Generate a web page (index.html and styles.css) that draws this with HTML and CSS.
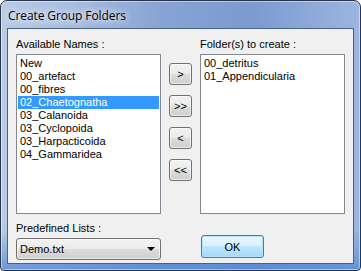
FILE: index.html
```html
<!DOCTYPE html>
<html>
<head>
<meta charset="utf-8">
<link rel="stylesheet" href="styles.css">
</head>
<body>
<div class="window">
  <div class="titlebar"><span class="title">Create Group Folders</span></div>
  <div class="client">
    <div class="col">
      <div class="label">Available Names :</div>
      <ul class="listbox">
        <li>New</li>
        <li>00_artefact</li>
        <li>00_fibres</li>
        <li class="selected">02_Chaetognatha</li>
        <li>03_Calanoida</li>
        <li>03_Cyclopoida</li>
        <li>03_Harpacticoida</li>
        <li>04_Gammaridea</li>
      </ul>
      <div class="label label-bottom">Predefined Lists :</div>
      <div class="combo"><span>Demo.txt</span><span class="arrow"></span></div>
    </div>
    <div class="mid">
      <button class="btn">&gt;</button>
      <button class="btn">&gt;&gt;</button>
      <button class="btn">&lt;</button>
      <button class="btn">&lt;&lt;</button>
    </div>
    <div class="col">
      <div class="label">Folder(s) to create :</div>
      <ul class="listbox">
        <li>00_detritus</li>
        <li>01_Appendicularia</li>
      </ul>
      <button class="btn ok">OK</button>
    </div>
  </div>
</div>
</body>
</html>
```

FILE: styles.css
```css
html, body {
  margin: 0;
  padding: 0;
  background: #ffffff;
}

.window {
  box-sizing: border-box;
  width: 361px;
  height: 271px;
  border: 1px solid #27364a;
  border-radius: 7px 7px 4px 4px;
  padding: 0 6px 6px 6px;
  display: flex;
  flex-direction: column;
  background:
    linear-gradient(to bottom, rgba(90,140,215,0) 0%, rgba(90,140,215,0) 85%, rgba(80,135,215,0.75) 100%),
    linear-gradient(to right, #b9cbe3 0%, #a9bfdf 18%, #86a3d3 45%, #7b9ad0 70%, #8eaad9 88%, #9db5df 100%);
  overflow: hidden;
  box-shadow: inset 0 0 0 1px rgba(255,255,255,0.45);
}

.titlebar {
  height: 27px;
  display: flex;
  align-items: center;
  padding-left: 1px;
  flex: none;
}

.title {
  font-family: "Open Sans", "Noto Sans", sans-serif;
  font-size: 12px;
  color: #000000;
  letter-spacing: -0.1px;
  text-shadow: 0 0 6px rgba(255,255,255,0.95), 0 0 10px rgba(255,255,255,0.8);
  margin-top: 2px;
}

.client {
  flex: 1;
  border: 1px solid #4a6282;
  background: #f0f0f0;
  display: flex;
  padding: 0 8px;
  gap: 8px;
  font-family: "Liberation Sans", Arial, sans-serif;
  font-size: 11px;
  color: #000000;
}

.col {
  width: 145px;
  display: flex;
  flex-direction: column;
  padding-top: 9px;
}

.label {
  height: 13px;
  line-height: 13px;
  margin-bottom: 3px;
  white-space: nowrap;
}

.label-bottom {
  margin-top: 8px;
}

.listbox {
  box-sizing: border-box;
  height: 160px;
  margin: 0;
  padding: 2px 1px 0 1px;
  list-style: none;
  background: #ffffff;
  border: 1px solid #828790;
}

.listbox li {
  height: 13px;
  line-height: 13px;
  padding-left: 2px;
  white-space: nowrap;
}

.listbox li.selected {
  background: #3399ff;
  color: #ffffff;
}

.combo {
  box-sizing: border-box;
  height: 22px;
  border: 1px solid #707070;
  border-radius: 3px;
  background: linear-gradient(#f2f2f2 0%, #ebebeb 50%, #dddddd 50%, #cfcfcf 100%);
  box-shadow: inset 0 0 0 1px rgba(255,255,255,0.6);
  display: flex;
  align-items: center;
  justify-content: space-between;
  padding: 0 5px 0 3px;
}

.arrow {
  width: 0;
  height: 0;
  border-left: 4px solid transparent;
  border-right: 4px solid transparent;
  border-top: 4px solid #000000;
}

.mid {
  width: 23px;
  display: flex;
  flex-direction: column;
  gap: 10px;
  padding-top: 34px;
}

.btn {
  box-sizing: border-box;
  width: 23px;
  height: 22px;
  padding: 0;
  margin: 0;
  border: 1px solid #707070;
  border-radius: 3px;
  background: linear-gradient(#f2f2f2 0%, #ebebeb 50%, #dddddd 50%, #cfcfcf 100%);
  box-shadow: inset 0 0 0 1px rgba(255,255,255,0.6);
  font-family: "Liberation Sans", Arial, sans-serif;
  font-size: 11px;
  color: #000000;
  line-height: 18px;
  letter-spacing: 0;
}

.btn.ok {
  width: 63px;
  height: 23px;
  margin-top: 21px;
  margin-left: 1px;
  border-color: #3c7fb1;
  background: linear-gradient(#eaf6fd 0%, #d9f0fc 50%, #bee6fd 50%, #a7d9f5 100%);
  box-shadow: inset 0 0 0 1px #b4e4fa;
}
```
